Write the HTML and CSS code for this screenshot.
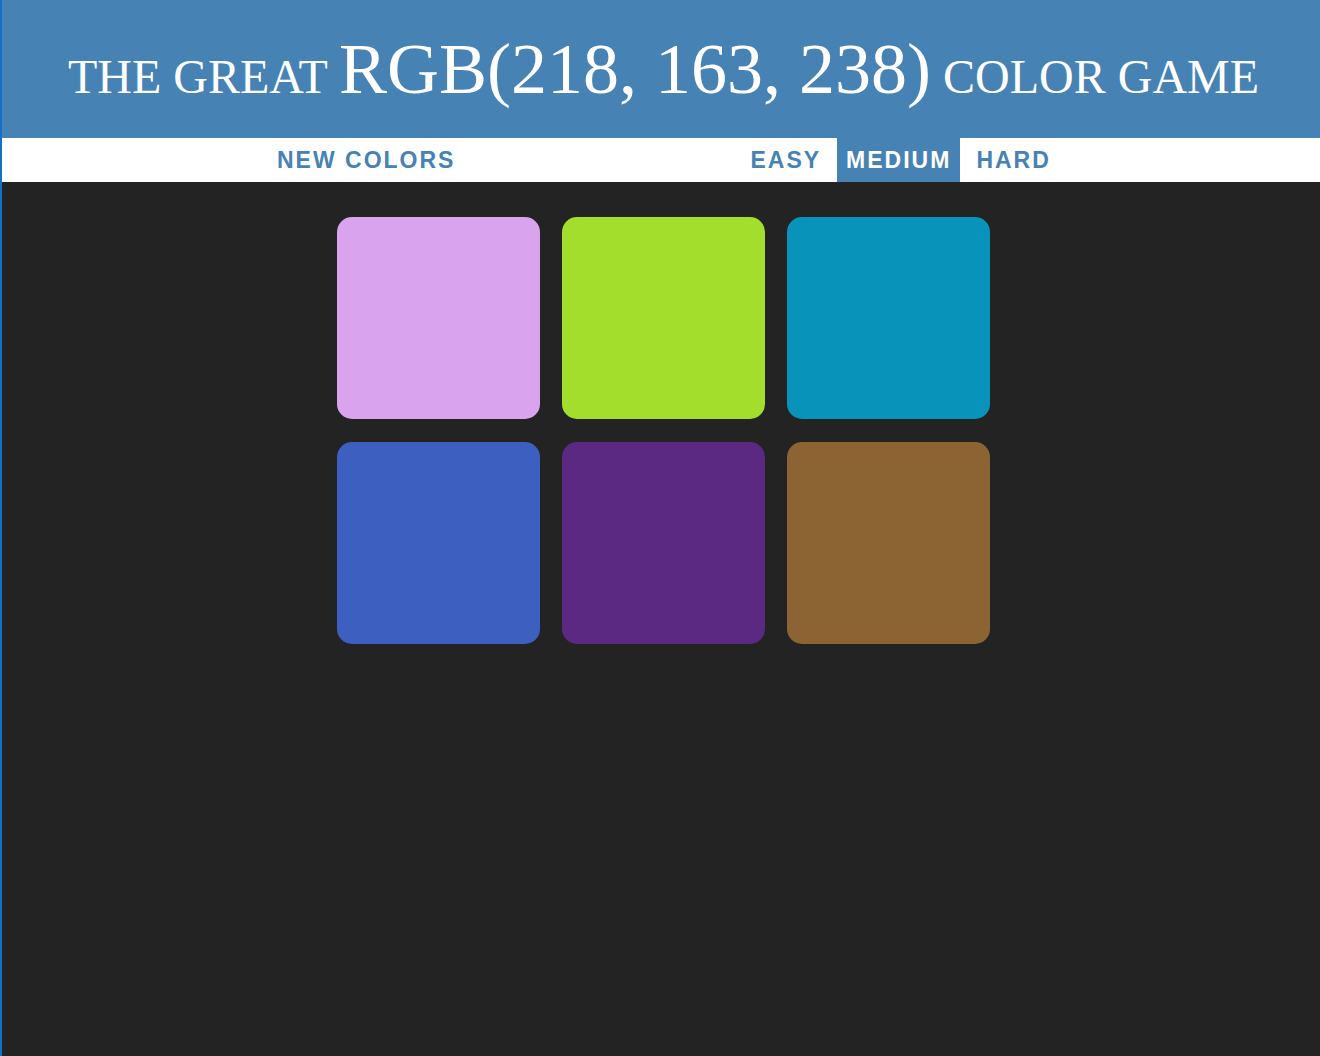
FILE: index.html
```html
<!DOCTYPE html>
<html lang="en">
<head>
<meta charset="utf-8">
<title>Color Game</title>
<link rel="stylesheet" href="styles.css">
</head>
<body>
  <header class="title">
    <h1 class="heading">The Great <span class="color-display">RGB(218, 163, 238)</span> Color Game</h1>
  </header>
  <nav class="stripe">
    <button class="btn btn-new">New Colors</button>
    <span class="message"></span>
    <button class="btn mode">Easy</button>
    <button class="btn mode selected">Medium</button>
    <button class="btn mode">Hard</button>
  </nav>
  <main class="board">
    <div class="grid">
      <div class="square sq-1"></div>
      <div class="square sq-2"></div>
      <div class="square sq-3"></div>
      <div class="square sq-4"></div>
      <div class="square sq-5"></div>
      <div class="square sq-6"></div>
    </div>
  </main>
</body>
</html>
```

FILE: styles.css
```css
html, body {
  margin: 0;
  padding: 0;
  height: 100%;
}
body {
  background: #232323;
  border-left: 2px solid #1570c8;
  min-height: 1056px;
  box-sizing: border-box;
  font-family: "Liberation Sans", Arial, sans-serif;
}
.title {
  background: #4682b4;
  height: 138px;
  padding-left: 5px;
  box-sizing: border-box;
  display: flex;
  align-items: center;
  justify-content: center;
}
.heading {
  margin: 0;
  font-family: "Liberation Serif", "Times New Roman", serif;
  font-weight: normal;
  font-size: 48px;
  line-height: 1;
  color: #ffffff;
  text-transform: uppercase;
  white-space: nowrap;
}
.color-display {
  font-size: 72px;
}
.stripe {
  background: #ffffff;
  height: 44px;
  display: flex;
  align-items: stretch;
}
.btn {
  border: none;
  background: none;
  margin: 0;
  padding: 0 9px;
  font-family: "Liberation Sans", Arial, sans-serif;
  font-weight: 700;
  font-size: 23px;
  letter-spacing: 2px;
  text-transform: uppercase;
  color: #4682b4;
  cursor: pointer;
  height: 100%;
}
.btn-new {
  margin-left: 266px;
}
.message {
  width: 277px;
}
.mode + .mode {
  margin-left: 7px;
}
.selected {
  background: #4682b4;
  color: #ffffff;
}
.board {
  padding-top: 35px;
}
.grid {
  width: 658px;
  margin: 0 auto;
  padding-left: 5px;
  box-sizing: border-box;
  display: grid;
  grid-template-columns: repeat(3, 203px);
  grid-auto-rows: 202px;
  column-gap: 22px;
  row-gap: 23px;
}
.square {
  border-radius: 15px;
}
.sq-1 { background: rgb(218, 163, 238); }
.sq-2 { background: #a4de2c; }
.sq-3 { background: #0894ba; }
.sq-4 { background: #3d5fc0; }
.sq-5 { background: #5b2882; }
.sq-6 { background: #8c6333; }
```
